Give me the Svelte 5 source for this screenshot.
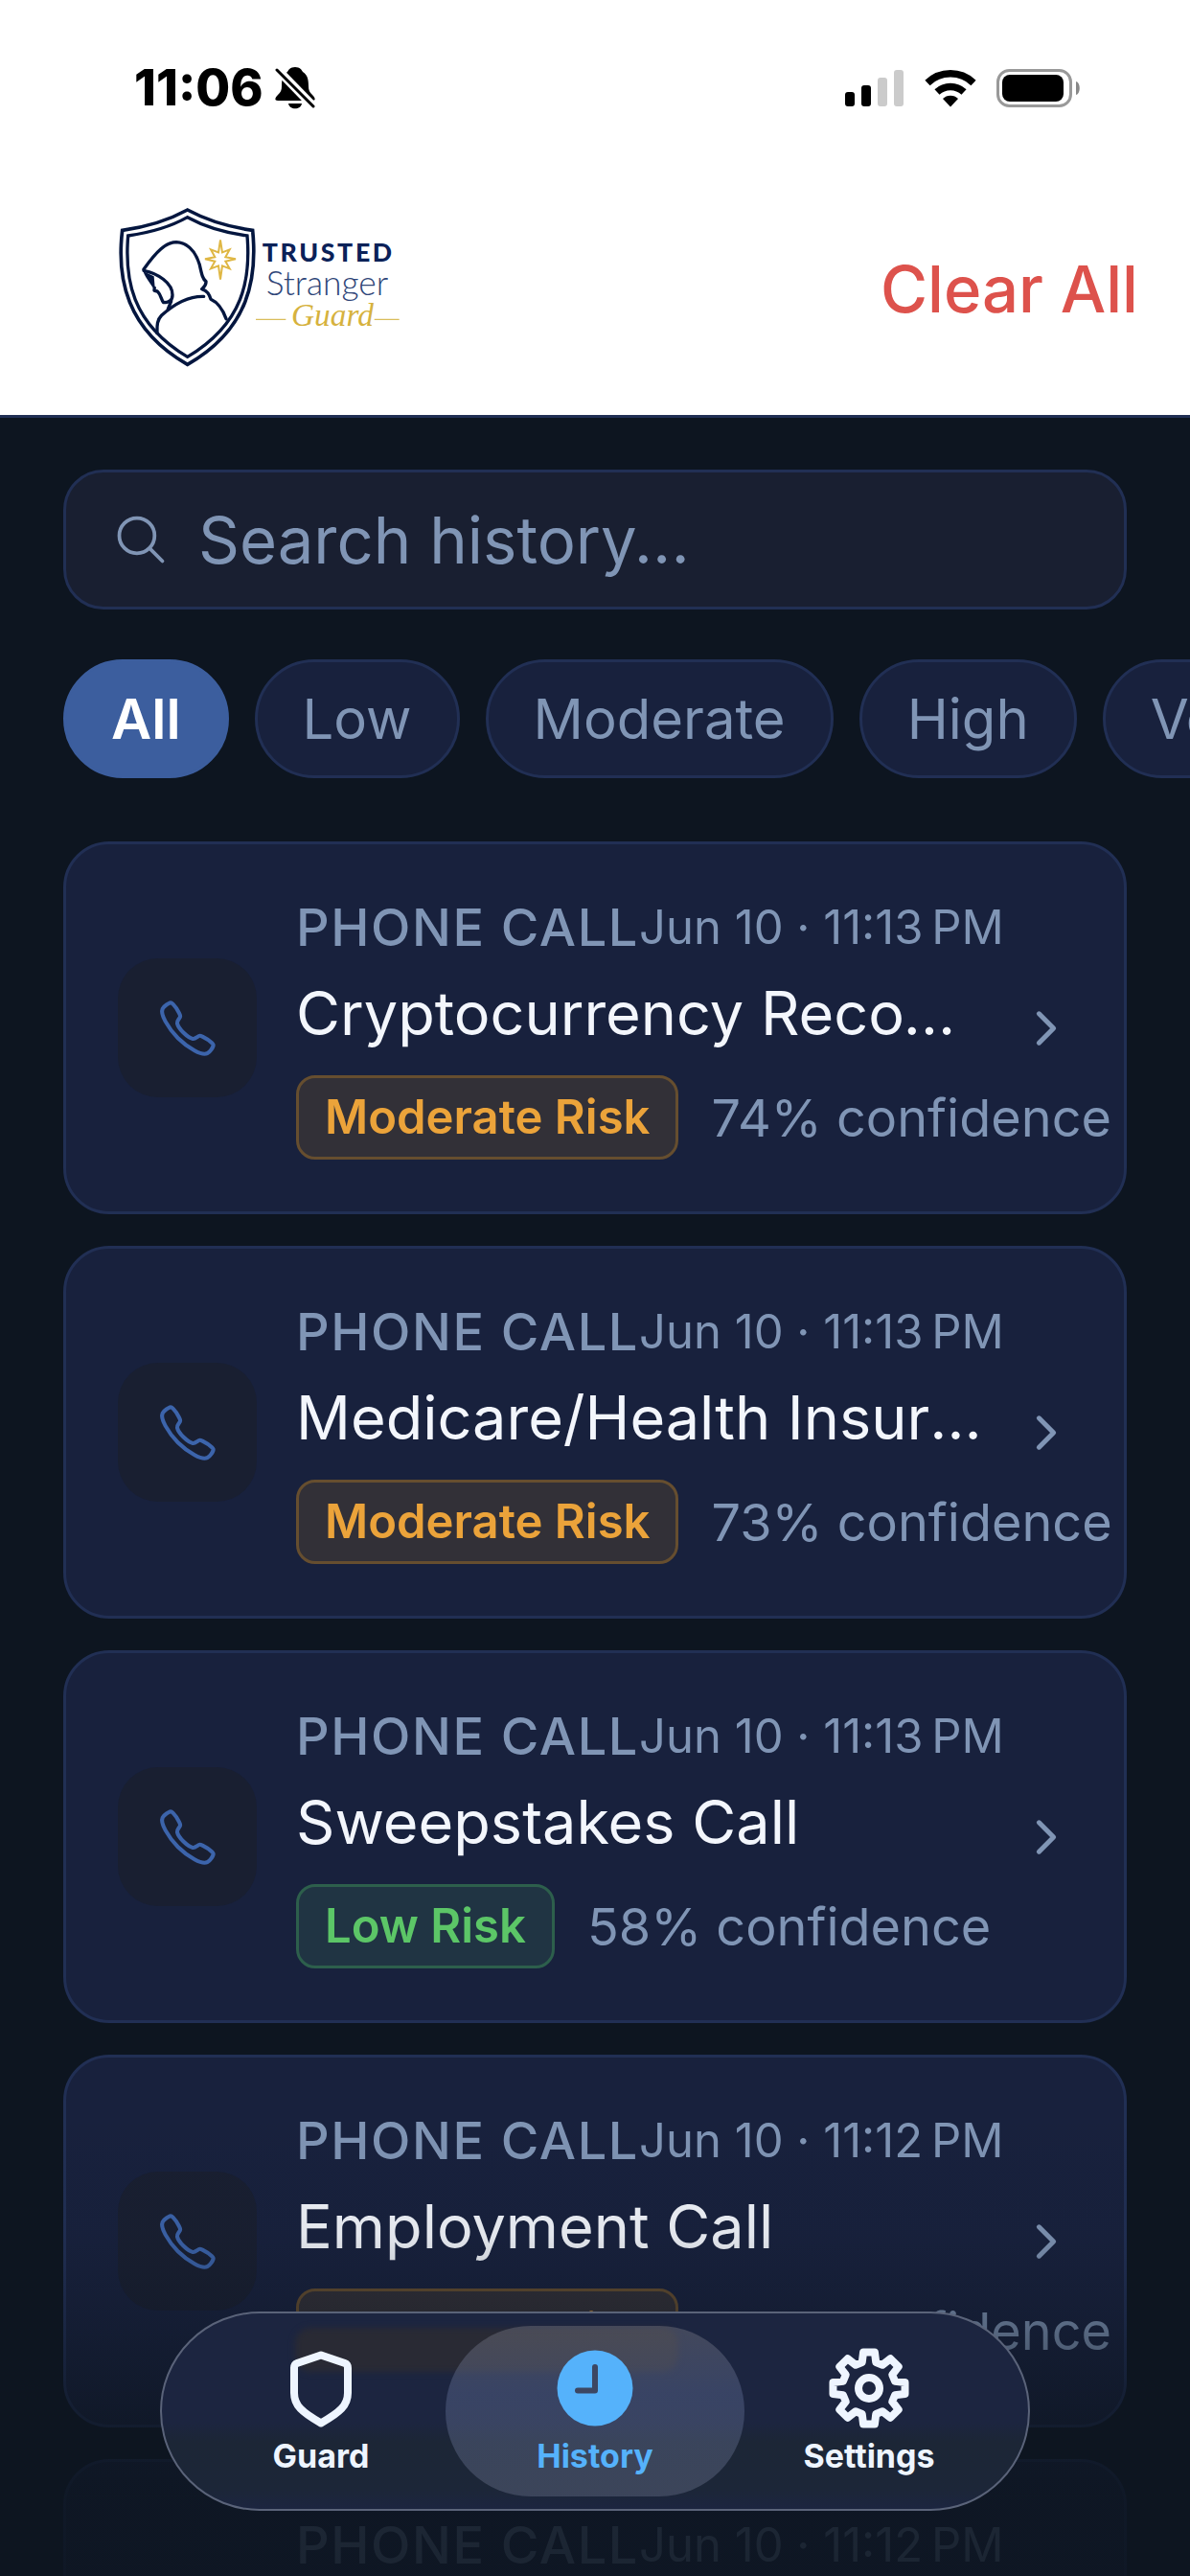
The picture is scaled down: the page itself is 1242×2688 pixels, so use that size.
<script lang="ts">
	type Risk = 'low' | 'moderate';

	interface Entry {
		id: number;
		type: string;
		date: string;
		title: string;
		risk: Risk;
		confidence: number;
	}

	const filters = ['All', 'Low', 'Moderate', 'High', 'Very High'];

	const riskLabels: Record<Risk, string> = {
		low: 'Low Risk',
		moderate: 'Moderate Risk'
	};

	const entries: Entry[] = [
		{ id: 1, type: 'Phone Call', date: 'Jun 10 · 11:13\u202fPM', title: 'Cryptocurrency Recovery Call', risk: 'moderate', confidence: 74 },
		{ id: 2, type: 'Phone Call', date: 'Jun 10 · 11:13\u202fPM', title: 'Medicare/Health Insurance Call', risk: 'moderate', confidence: 73 },
		{ id: 3, type: 'Phone Call', date: 'Jun 10 · 11:13\u202fPM', title: 'Sweepstakes Call', risk: 'low', confidence: 58 },
		{ id: 4, type: 'Phone Call', date: 'Jun 10 · 11:12\u202fPM', title: 'Employment Call', risk: 'moderate', confidence: 74 },
		{ id: 5, type: 'Phone Call', date: 'Jun 10 · 11:12\u202fPM', title: 'Phone Call', risk: 'low', confidence: 58 }
	];

	let activeFilter = $state('All');
	let query = $state('');

	let visible = $derived(
		entries.filter(
			(e) =>
				(activeFilter === 'All' || e.risk === activeFilter.toLowerCase()) &&
				e.title.toLowerCase().includes(query.toLowerCase())
		)
	);

	// Outline of the settings gear: eight tapered teeth
	function gearPath(teeth: number, inner: number, outer: number) {
		const points: string[] = [];
		const step = 360 / teeth;
		for (let i = 0; i < teeth; i++) {
			for (const [r, offset] of [[inner, -15], [outer, -9], [outer, 9], [inner, 15]]) {
				const a = ((i * step + offset - 90) * Math.PI) / 180;
				points.push(`${(r * Math.cos(a)).toFixed(2)} ${(r * Math.sin(a)).toFixed(2)}`);
			}
		}
		return `M${points.join('L')}Z`;
	}
</script>

<div class="screen">
	<header class="header">
		<div class="status-bar">
			<div class="status-left">
				<span class="time">11:06</span>
				<svg class="bell" viewBox="0 0 42 44" aria-hidden="true">
					<path d="M21 0c-5 0-7 3-8 5C8 8 7 13 7 20c0 4-1 6-4 9-3 3-4 6 0 6h36c4 0 3-3 0-6-3-3-4-5-4-9 0-7-1-12-6-15-1-2-3-5-8-5z" />
					<path d="M14 38h14c-1 7-13 7-14 0z" />
					<path d="M3 3l37 38" stroke="#fff" stroke-width="9" />
					<path d="M2 3l38 38" stroke="#000" stroke-width="3" stroke-linecap="round" />
				</svg>
			</div>
			<div class="status-right">
				<svg width="62" height="40" viewBox="0 0 62 40" aria-hidden="true">
					<rect x="0" y="24" width="10" height="15" rx="3" />
					<rect x="17" y="17" width="10" height="22" rx="3" />
					<rect x="34" y="9" width="10" height="30" rx="3" fill="#cbcbcb" />
					<rect x="51" y="1" width="10" height="38" rx="3" fill="#cbcbcb" />
				</svg>
				<svg width="54" height="40" viewBox="0 0 54 40" aria-hidden="true">
					<path d="M27 39.500l8-8.500c-4-4.500-12-4.500-16 0z" />
					<path d="M13 24a20.500 20.500 0 0128 0" fill="none" stroke="#000" stroke-width="7.500" />
					<path d="M3 14.500a34.500 34.500 0 0148 0" fill="none" stroke="#000" stroke-width="7.500" />
				</svg>
				<svg width="88" height="40" viewBox="0 0 88 40" aria-hidden="true">
					<rect x="1.500" y="1.500" width="76" height="37" rx="12" fill="none" stroke="#999" stroke-width="3" />
					<rect x="6" y="6" width="64" height="28" rx="8" />
					<path d="M83 13c5 1 5 13 0 14z" fill="#888" />
				</svg>
			</div>
		</div>
		<div class="title-row">
			<svg class="logo" viewBox="0 20 1020 630" role="img" aria-label="Trusted Stranger Guard">
				<g fill="none" stroke="#04163f" stroke-linejoin="miter">
					<path stroke-width="11" d="M287 86C350 120 420 140 491 150C506 300 480 460 287 570C95 460 65 300 83 150C155 140 225 120 287 86Z" />
					<path stroke-width="10" d="M287 109C345 141 410 158 474 167C485 300 465 440 287 546C110 440 90 300 101 167C165 158 230 141 287 109Z" />
					<g stroke-width="10" stroke-linecap="round" stroke-linejoin="round">
						<path d="M150 272C190 215 220 187 252 187C295 190 315 225 325 258C332 290 335 303 345 310C346 322 338 328 332 334C350 340 355 350 360 366C385 377 400 405 408 427" />
						<path d="M150 276C195 285 240 315 240 352C240 366 232 376 212 376C204 366 204 352 194 342C186 336 180 345 184 330" />
						<path d="M338 357C280 355 235 390 206 416C190 432 192 452 192 472" />
						<path d="M236 372L226 396" />
					</g>
					<path stroke="none" fill="#04163f" d="M148 278L182 294L186 342C174 318 158 305 148 278Z" />
				</g>
				<path
					fill="none"
					stroke="#dfb744"
					stroke-width="6"
					d="M390 180L396 219L419 210L406 234L438 240L406 247L419 270L396 261L390 304L384 261L360 270L373 247L342 240L373 234L360 210L384 219Z"
				/>
				<text x="521" y="248" class="logo-trusted">TRUSTED</text>
				<text x="533" y="354" class="logo-stranger">Stranger</text>
				<text x="612" y="450" class="logo-guard">Guard</text>
				<path d="M501 429H595M872 429H950" stroke="#d9bd5c" stroke-width="4" />
			</svg>
			<button class="clear">Clear All</button>
		</div>
	</header>

	<main class="content">
		<label class="search">
			<svg class="search-icon" viewBox="0 0 512 512" aria-hidden="true">
				<path d="M221.090 64a157.090 157.090 0 10157.090 157.090A157.100 157.100 0 00221.090 64z" />
				<path d="M338.290 338.290L448 448" />
			</svg>
			<input type="text" aria-label="Search history" placeholder="Search history..." bind:value={query} />
		</label>

		<div class="filters">
			{#each filters as filter (filter)}
				<button class="chip" class:active={activeFilter === filter} onclick={() => (activeFilter = filter)}>
					{filter}
				</button>
			{/each}
		</div>

		<ul class="list">
			{#each visible as entry (entry.id)}
				<li>
					<button class="card">
						<span class="tile">
							<svg viewBox="0 0 512 512" aria-hidden="true">
								<path d="M451 374c-15.880-16-54.340-39.350-73-48.760-24.300-12.240-26.300-13.240-45.400.950-12.740 9.470-21.210 17.930-36.120 14.750s-47.310-21.110-75.680-49.390-47.340-61.620-50.530-76.480 5.410-23.230 14.790-36c13.220-18 12.220-21 .920-45.300-8.810-18.900-32.840-57-48.900-72.800C119.900 44 119.900 47 108.830 51.600A160.150 160.150 0 0083 65.370C67 76 58.120 84.830 51.910 98.100s-9 44.380 23.070 102.640 54.570 88.050 101.140 134.490S258.500 406.640 310.850 436c64.760 36.270 89.600 29.200 102.910 23s22.180-15 32.830-31a159.090 159.090 0 0013.800-25.800C465 391.170 468 391.170 451 374z" />
							</svg>
						</span>
						<span class="body">
							<span class="meta">
								<span class="type">{entry.type}</span>
								<span class="date">{entry.date}</span>
							</span>
							<span class="title">{entry.title}</span>
							<span class="result">
								<span class="badge {entry.risk}">{riskLabels[entry.risk]}</span>
								<span class="confidence">{entry.confidence}% confidence</span>
							</span>
						</span>
						<svg class="chevron" viewBox="0 0 512 512" aria-hidden="true">
							<path d="M184 112l144 144-144 144" />
						</svg>
					</button>
				</li>
			{/each}
		</ul>
	</main>

	<div class="fade"></div>

	<nav class="tabs">
		<span class="glow"></span>
		<a class="tab" href="#guard">
			<svg viewBox="-42 -42 84 84" aria-hidden="true">
				<path class="line" d="M0-34.500L25-26Q28-25 28-21V5C28 18 20 25 0 36.500C-20 25-28 18-28 5V-21Q-28-25-25-26Z" />
			</svg>
			Guard
		</a>
		<a class="tab active" href="#history" aria-current="page">
			<svg viewBox="-42 -42 84 84" aria-hidden="true">
				<circle r="39.500" fill="#55b2fb" />
				<path d="M0-22V2.500H-18" fill="none" stroke="#3c4763" stroke-width="6" stroke-linecap="round" stroke-linejoin="round" />
			</svg>
			History
		</a>
		<a class="tab" href="#settings">
			<svg viewBox="-42 -42 84 84" aria-hidden="true">
				<path class="line" d={gearPath(8, 28, 38)} />
				<circle class="line" r="11" />
			</svg>
			Settings
		</a>
	</nav>
</div>

<style>
	:global(body) {
		background: #0d1520;
	}

	.screen {
		--bg: #0d1520;
		--card: #18213d;
		--surface: #191f31;
		--border: #212f54;
		--muted: #8095b5;
		position: relative;
		display: flex;
		flex-direction: column;
		height: 100vh;
		overflow: hidden;
		background: var(--bg);
		font-family: Inter, 'Liberation Sans', sans-serif;
	}

	button,
	input {
		font: inherit;
		color: inherit;
		background: none;
		border: 0;
		padding: 0;
		margin: 0;
	}

	button {
		cursor: pointer;
	}

	.header {
		flex-shrink: 0;
		background: #fff;
		border-bottom: 3px solid var(--border);
	}

	.status-bar {
		display: flex;
		justify-content: space-between;
		align-items: center;
		padding: 62px 114px 53px 140px;
	}

	.status-left {
		display: flex;
		align-items: center;
		gap: 12px;
	}

	.time {
		font-size: 52px;
		line-height: 60px;
		font-weight: 800;
		color: #000;
	}

	.bell {
		width: 42px;
		height: 44px;
	}

	.status-right {
		display: flex;
		align-items: center;
		gap: 21px;
	}

	.title-row {
		display: flex;
		justify-content: space-between;
		align-items: center;
		padding: 10px 54px 14px 100px;
	}

	.logo {
		width: 340px;
		height: 234px;
	}

	.logo-trusted {
		font: 900 80px Lato, sans-serif;
		letter-spacing: 8px;
		fill: #0b2158;
	}

	.logo-stranger {
		font: 300 106px Lato, sans-serif;
		fill: #2f4578;
	}

	.logo-guard {
		font: italic 400 100px 'Liberation Serif', serif;
		fill: #d6b23e;
	}

	.clear {
		font-size: 67px;
		line-height: 82px;
		font-weight: 500;
		color: #dd524c;
	}

	.content {
		flex: 1;
		min-height: 0;
		overflow: hidden;
		padding: 54px 66px 0;
	}

	.search {
		display: flex;
		align-items: center;
		gap: 30px;
		padding: 29px 48px;
		background: var(--surface);
		border: 3px solid var(--border);
		border-radius: 42px;
	}

	.search-icon {
		width: 60px;
		height: 60px;
		fill: none;
		stroke: var(--muted);
		stroke-width: 32;
		stroke-linecap: round;
	}

	.search input {
		flex: 1;
		min-width: 0;
		font-size: 67px;
		height: 82px;
		color: #f3f6fc;
		outline: none;
	}

	.search input::placeholder {
		color: var(--muted);
		opacity: 1;
	}

	.filters {
		display: flex;
		gap: 27px;
		margin: 52px -66px 66px 0;
		overflow: hidden;
	}

	.chip {
		flex-shrink: 0;
		padding: 20px 47px;
		font-size: 58px;
		line-height: 78px;
		color: var(--muted);
		background: var(--card);
		border: 3px solid var(--border);
		border-radius: 62px;
	}

	.chip.active {
		font-weight: 600;
		color: #fff;
		background: #3c5e9e;
		border-color: #3c5e9e;
	}

	.list {
		display: flex;
		flex-direction: column;
		gap: 33px;
		margin: 0;
		padding: 0;
		list-style: none;
	}

	.card {
		display: flex;
		align-items: center;
		width: 100%;
		padding: 54px;
		text-align: left;
		white-space: nowrap;
		background: var(--card);
		border: 3px solid var(--border);
		border-radius: 48px;
	}

	.tile {
		display: flex;
		flex-shrink: 0;
		align-items: center;
		justify-content: center;
		width: 145px;
		height: 145px;
		margin-right: 41px;
		background: var(--surface);
		border-radius: 42px;
	}

	.tile svg {
		width: 66px;
		height: 66px;
		fill: none;
		stroke: #3c64ab;
		stroke-width: 32;
	}

	.body {
		display: flex;
		flex: 1;
		flex-direction: column;
		min-width: 0;
	}

	.meta {
		display: flex;
		align-items: center;
		justify-content: space-between;
		line-height: 66px;
		margin-bottom: 12px;
		color: var(--muted);
	}

	.type {
		font-size: 54px;
		font-weight: 500;
		letter-spacing: 0.03em;
		text-transform: uppercase;
	}

	.date {
		font-size: 49px;
	}

	.title {
		overflow: hidden;
		margin-bottom: 21px;
		padding-right: 20px;
		font-size: 63px;
		line-height: 88px;
		text-overflow: ellipsis;
		color: #f3f6fc;
	}

	.result {
		display: flex;
		align-items: center;
		gap: 34px;
	}

	.badge {
		padding: 11px 27px;
		font-size: 49px;
		font-weight: 600;
		line-height: 60px;
		border: 3px solid;
		border-radius: 20px;
	}

	.badge.moderate {
		color: #eba33a;
		background: #323037;
		border-color: #664e2f;
	}

	.badge.low {
		color: #5cc667;
		background: #203443;
		border-color: #2d5f4c;
	}

	.confidence {
		font-size: 54px;
		color: var(--muted);
	}

	.chevron {
		flex-shrink: 0;
		width: 54px;
		height: 54px;
		margin-left: 18px;
		fill: none;
		stroke: var(--muted);
		stroke-width: 48;
		stroke-linecap: round;
		stroke-linejoin: round;
	}

	/* List content dims out behind the tab bar */
	.fade {
		position: absolute;
		right: 0;
		bottom: 0;
		left: 0;
		height: 488px;
		pointer-events: none;
		background: linear-gradient(
			rgba(13, 21, 32, 0),
			rgba(13, 21, 32, 0.07) 27%,
			rgba(13, 21, 32, 0.35) 47%,
			rgba(13, 21, 32, 0.72) 68%,
			rgba(13, 21, 32, 0.86) 82%,
			rgba(13, 21, 32, 0.88)
		);
	}

	.tabs {
		position: absolute;
		bottom: 68px;
		left: 50%;
		display: flex;
		padding: 13px 10px;
		overflow: hidden;
		transform: translateX(-50%);
		background: linear-gradient(#1c2540 55%, #1c2636 66%, #1c2638 90%, #1c2540);
		border: 2px solid #5a6379;
		border-radius: 104px;
	}

	/* Blurred reflection of the badge under the glass */
	.glow {
		position: absolute;
		top: 15px;
		left: 139px;
		width: 400px;
		height: 46px;
		background: #292a34;
		border-radius: 16px;
		filter: blur(3px);
	}

	.tab {
		position: relative;
		display: flex;
		flex-direction: column;
		align-items: center;
		width: 312px;
		padding: 23px 0 22px;
		box-sizing: border-box;
		font-size: 34px;
		font-weight: 700;
		line-height: 40px;
		color: #eef5ff;
		text-decoration: none;
		border-radius: 89px;
	}

	.tab + .tab {
		margin-left: -26px;
	}

	.tab svg {
		width: 84px;
		height: 84px;
		margin-bottom: 9px;
	}

	.tab .line {
		fill: none;
		stroke: #eef5ff;
		stroke-width: 8;
		stroke-linejoin: round;
	}

	.tab.active {
		color: #55b2fb;
		background: linear-gradient(rgba(120, 120, 130, 0.42), rgba(96, 110, 150, 0.42) 40%, rgba(104, 112, 136, 0.42));
	}
</style>
